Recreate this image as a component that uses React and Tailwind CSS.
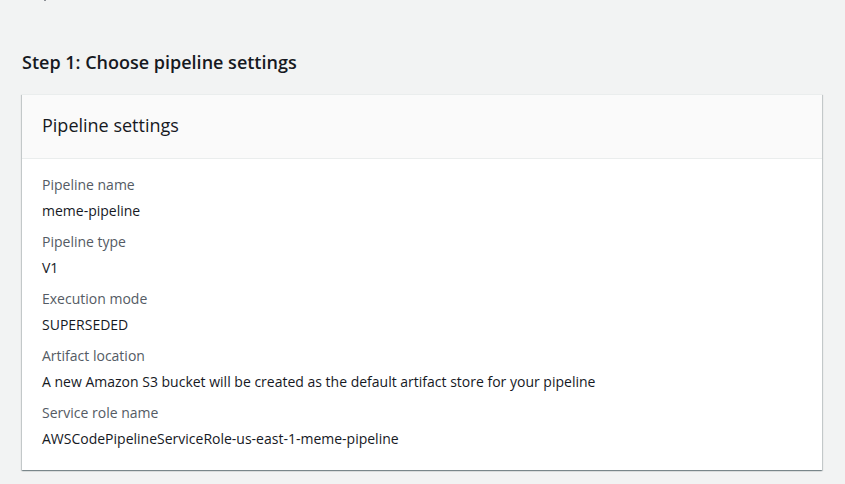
const settings = [
  ["Pipeline name", "meme-pipeline"],
  ["Pipeline type", "V1"],
  ["Execution mode", "SUPERSEDED"],
  ["Artifact location", "A new Amazon S3 bucket will be created as the default artifact store for your pipeline"],
  ["Service role name", "AWSCodePipelineServiceRole-us-east-1-meme-pipeline"],
];

export default function App() {
  return (
    <main className="min-h-screen bg-[#f2f3f3] pr-[23px] pl-[22px] pb-[14px] font-['Open_Sans','Noto_Sans',sans-serif] text-[#16191f]">
      <div className="ml-[22px] h-px w-[2px] bg-[#8d9096]" aria-hidden="true" />
      <h2 className="mt-[46px] text-lg leading-[30px] font-semibold">Step 1: Choose pipeline settings</h2>
      <section className="mt-[17px] bg-white shadow-[0_1px_1px_0_rgba(0,28,36,0.3),1px_1px_1px_0_rgba(0,28,36,0.15),-1px_1px_1px_0_rgba(0,28,36,0.15)]">
        <header className="border-y border-[#eaeded] bg-[#fafafa] px-5 pt-[18px] pb-5">
          <h3 className="text-lg leading-[25px]">Pipeline settings</h3>
        </header>
        <dl className="flex flex-col gap-[9px] px-5 pt-[15px] pb-5">
          {settings.map(([label, value]) => (
            <div key={label} className="flex flex-col gap-1 text-sm leading-[22px]">
              <dt className="text-[#545b64]">{label}</dt>
              <dd>{value}</dd>
            </div>
          ))}
        </dl>
      </section>
    </main>
  );
}
